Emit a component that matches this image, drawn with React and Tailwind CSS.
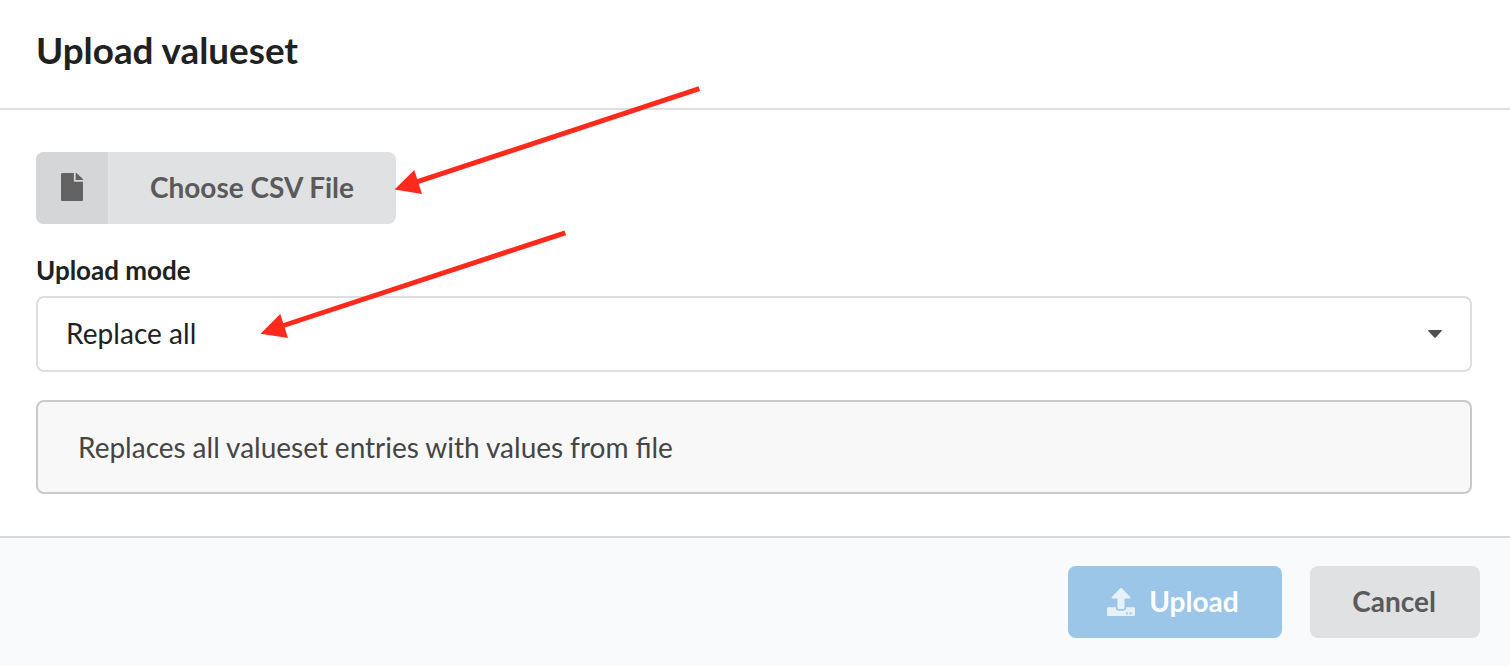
import React from 'react';

function FileIcon() {
  return (
    <svg className="mb-0.5 h-7 w-[22px]" viewBox="0 0 384 512" preserveAspectRatio="none" fill="#636364">
      <path d="M224 136V0H24C10.700 0 0 10.700 0 24v464c0 13.300 10.700 24 24 24h336c13.300 0 24-10.700 24-24V160H248c-13.200 0-24-10.800-24-24zm160-14.100v6.100H256V0h6.100c6.400 0 12.500 2.500 17 7l97.900 98c4.500 4.500 7 10.600 7 16.900z" />
    </svg>
  );
}

function UploadIcon() {
  return (
    <svg className="h-7 w-7" viewBox="0 0 512 512" fill="#ffffff" fillOpacity="0.76">
      <path d="M296 384h-80c-13.300 0-24-10.700-24-24V192h-87.700c-17.800 0-26.700-21.500-14.100-34.100L242.300 5.700c7.500-7.500 19.800-7.500 27.300 0l152.200 152.200c12.600 12.600 3.700 34.100-14.100 34.100H320v168c0 13.300-10.700 24-24 24zm216-8v112c0 13.300-10.700 24-24 24H24c-13.300 0-24-10.700-24-24V376c0-13.300 10.700-24 24-24h136v8c0 30.900 25.100 56 56 56h80c30.900 0 56-25.100 56-56v-8h136c13.300 0 24 10.700 24 24zm-124 88c0-11-9-20-20-20s-20 9-20 20 9 20 20 20 20-9 20-20zm64 0c0-11-9-20-20-20s-20 9-20 20 9 20 20 20 20-9 20-20z" />
    </svg>
  );
}

function Arrows() {
  return (
    <svg className="pointer-events-none absolute left-0 top-0 h-[666px] w-[1510px]" viewBox="0 0 1510 666" fill="#fe2a1c">
      <path d="M699.300 88.700 L416 182.200 M565.300 232.800 L282 326" stroke="#fe2a1c" strokeWidth="5" />
      <path d="M394.500 189.500 L414.300 170 L422 194Z M260.500 333.700 L280.300 314 L288 338Z" />
    </svg>
  );
}

export default function App() {
  return (
    <div className="relative flex h-[666px] w-full flex-col bg-white font-['Lato',sans-serif] text-[28px] leading-[36px] text-[#212121]">
      <header className="h-[110px] border-b-2 border-[#dedede] px-9 pt-[27px]">
        <h1 className="text-[36.8px] font-bold leading-[46px]">Upload valueset</h1>
      </header>
      <main className="flex-1 px-9 pr-[38px] pt-[42px]">
        <button className="flex h-[72px] w-[360px] overflow-hidden rounded-lg bg-[#e0e1e2] font-bold text-[#5a5a5b]">
          <span className="flex h-full w-[72px] items-center justify-center bg-[#d5d6d7]"><FileIcon /></span>
          <span className="flex h-full flex-1 items-center justify-center pb-0.5">Choose CSV File</span>
        </button>
        <label className="mt-[27px] block text-[26px] font-bold leading-[38px]">Upload mode</label>
        <div className="mt-[7px] flex h-[76px] items-center justify-between rounded-lg border-2 border-[#dedede] pl-7 pr-7">
          <span className="pb-0.5 tracking-[0.05px]">Replace all</span>
          <svg className="h-2 w-[14px]" viewBox="0 0 14 8" fill="#505050"><path d="M.5 0h13q.8.500.2 1L8 7.300q-1 1-2 0L.3 1Q-.3.500.5 0Z" /></svg>
        </div>
        <div className="mt-7 flex h-[94px] items-center rounded-lg border-2 border-[#c8c9ca] bg-[#f8f8f8] pl-10 text-[#454545] [word-spacing:-0.22px]">Replaces all valueset entries with values from file</div>
      </main>
      <footer className="flex h-[130px] justify-end gap-7 border-t-2 border-[#d9dadc] bg-[#f9fafb] pr-[30px] pt-7 font-bold">
        <button className="flex h-[72px] w-[214px] items-center justify-center gap-[14px] rounded-lg bg-[#9bc6e8] pr-[4px] text-white"><UploadIcon /><span className="pb-0.5">Upload</span></button>
        <button className="h-[72px] w-[170px] rounded-lg bg-[#e0e1e2] pb-0.5 pr-0.5 text-[#5a5a5b]">Cancel</button>
      </footer>
      <Arrows />
    </div>
  );
}
